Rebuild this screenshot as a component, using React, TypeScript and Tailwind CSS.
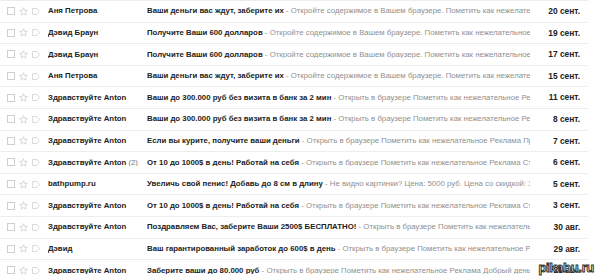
import React from 'react';

interface Mail {
  from: string;
  count?: string;
  subject: string;
  snippet: string;
  date: string;
}

const mails: Mail[] = [
  { from: 'Аня Петрова', subject: 'Ваши деньги вас ждут, заберите их', snippet: 'Откройте содержимое в Вашем браузере. Пометить как нежелательное Для', date: '20 сент.' },
  { from: 'Дэвид Браун', subject: 'Получите Ваши 600 долларов', snippet: 'Откройте содержимое в Вашем браузере. Пометить как нежелательное Для', date: '19 сент.' },
  { from: 'Дэвид Браун', subject: 'Получите Ваши 600 долларов', snippet: 'Откройте содержимое в Вашем браузере. Пометить как нежелательное Для', date: '17 сент.' },
  { from: 'Аня Петрова', subject: 'Ваши деньги вас ждут, заберите их', snippet: 'Откройте содержимое в Вашем браузере. Пометить как нежелательное Для', date: '15 сент.' },
  { from: 'Здравствуйте Anton', subject: 'Ваши до 300.000 руб без визита в банк за 2 мин', snippet: 'Открыть в браузере Пометить как нежелательное Реклама Добрый', date: '11 сент.' },
  { from: 'Здравствуйте Anton', subject: 'Ваши до 300.000 руб без визита в банк за 2 мин', snippet: 'Открыть в браузере Пометить как нежелательное Реклама Добрый', date: '8 сент.' },
  { from: 'Здравствуйте Anton', subject: 'Если вы курите, получите ваши деньги', snippet: 'Открыть в браузере Пометить как нежелательное Реклама Приглашаем', date: '7 сент.' },
  { from: 'Здравствуйте Anton', count: '(2)', subject: 'От 10 до 1000$ в день! Работай на себя', snippet: 'Открыть в браузере Пометить как нежелательное Реклама Станьте', date: '6 сент.' },
  { from: 'bathpump.ru', subject: 'Увеличь свой пенис! Добавь до 8 см в длину', snippet: 'Не видно картинки? Цена: 5000 руб. Цена со скидкой: 3700 руб.', date: '5 сент.' },
  { from: 'Здравствуйте Anton', subject: 'От 10 до 1000$ в день! Работай на себя', snippet: 'Открыть в браузере Пометить как нежелательное Реклама Станьте', date: '3 сент.' },
  { from: 'Здравствуйте Anton', subject: 'Поздравляем Вас, заберите Ваши 2500$ БЕСПЛАТНО!', snippet: 'Открыть в браузере Пометить как нежелательное Реклама', date: '30 авг.' },
  { from: 'Дэвид', subject: 'Ваш гарантированный заработок до 600$ в день', snippet: 'Открыть в браузере Пометить как нежелательное Реклама Добрый', date: '29 авг.' },
  { from: 'Здравствуйте Anton', subject: 'Заберите ваши до 80.000 руб', snippet: 'Открыть в браузере Пометить как нежелательное Реклама Добрый день! Если', date: '28 авг.' },
];

const Star = () => (
  <svg width="9" height="9" viewBox="0 0 10 10" className="shrink-0">
    <path
      d="M5 0.8 L6.2 3.7 L9.3 3.9 L6.9 5.9 L7.7 9 L5 7.3 L2.3 9 L3.1 5.9 L0.7 3.9 L3.8 3.7 Z"
      fill="none"
      stroke="#c8c8c8"
      strokeWidth="0.8"
    />
  </svg>
);

const Label = () => (
  <svg width="8" height="7" viewBox="0 0 8 7" className="shrink-0">
    <path d="M0.5 0.5 H5 L7.4 3.5 L5 6.5 H0.5 Z" fill="none" stroke="#d0d0d0" strokeWidth="0.8" />
  </svg>
);

const Row: React.FC<{ mail: Mail }> = ({ mail }) => (
  <div className="flex h-[21.6px] items-center border-b border-[#ededed] text-[7.8px] leading-none">
    <div className="flex w-[48px] shrink-0 items-center pl-[7px]">
      <span className="h-[8px] w-[8px] shrink-0 border border-[#cfcfcf] bg-white" />
      <span className="ml-[4px]">
        <Star />
      </span>
      <span className="ml-[4px]">
        <Label />
      </span>
    </div>
    <div className="w-[99px] shrink-0 overflow-hidden whitespace-nowrap font-bold text-[#222]">
      {mail.from}
      {mail.count && <span className="font-normal text-[#777]"> {mail.count}</span>}
    </div>
    <div className="min-w-0 flex-1 overflow-hidden whitespace-nowrap">
      <span className="font-bold text-[#222]">{mail.subject}</span>
      <span className="text-[#8f8f8f]"> - {mail.snippet}</span>
    </div>
    <div className="w-[58px] shrink-0 pr-[8px] text-right text-[8.4px] font-bold text-[#222]">{mail.date}</div>
  </div>
);

export default function App() {
  return (
    <div className="relative h-[280px] w-[600px] overflow-hidden bg-white font-['Liberation_Sans',Arial,sans-serif]">
      <div className="w-[588px] border-t border-[#ededed]">
        {mails.map((m, i) => (
          <Row key={i} mail={m} />
        ))}
      </div>
      <span className="absolute bottom-[3px] right-[6px] text-[13px] font-bold tracking-tight text-white [-webkit-text-stroke:1px_#333]">
        pikabu.ru
      </span>
    </div>
  );
}
